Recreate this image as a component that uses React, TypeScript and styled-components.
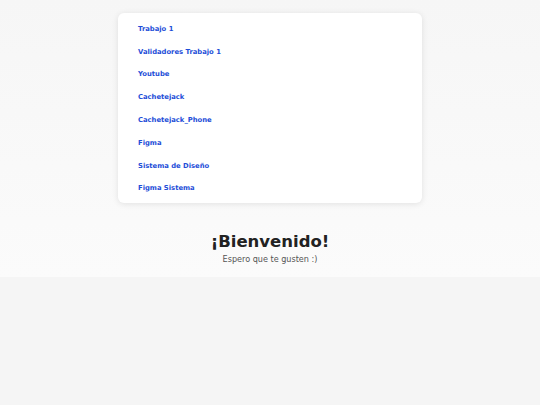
import React from "react";
import styled, { createGlobalStyle } from "styled-components";

const Global = createGlobalStyle`
  html, body { margin: 0; padding: 0; }
  body {
    background: #f5f5f5;
    font-family: "DejaVu Sans", Verdana, sans-serif;
  }
`;

const Hero = styled.main`
  display: flex;
  flex-direction: column;
  align-items: center;
  padding-top: 13px;
  height: 264px;
  background: linear-gradient(180deg, #f6f6f6 0%, #fbfbfb 100%);
`;

const Card = styled.nav`
  width: 304px;
  box-sizing: border-box;
  background: #ffffff;
  border-radius: 6px;
  box-shadow: 0 1px 6px rgba(0, 0, 0, 0.1);
  padding: 4.8px 20px 2.4px;
  display: flex;
  flex-direction: column;
`;

const Link = styled.a`
  display: block;
  height: 22.8px;
  line-height: 22.8px;
  font-size: 6.8px;
  font-weight: bold;
  color: #1d4ed8;
  text-decoration: none;
`;

const Title = styled.h1`
  margin: 29px 0 0;
  font-size: 16.5px;
  font-weight: bold;
  color: #222;
  line-height: 20px;
`;

const Subtitle = styled.p`
  margin: 1px 0 0;
  font-size: 8.1px;
  color: #555;
  line-height: 12px;
`;

const links = [
  "Trabajo 1",
  "Validadores Trabajo 1",
  "Youtube",
  "Cachetejack",
  "Cachetejack_Phone",
  "Figma",
  "Sistema de Diseño",
  "Figma Sistema",
];

export default function App() {
  return (
    <>
      <Global />
      <Hero>
        <Card>
          {links.map((l) => (
            <Link key={l} href="#">
              {l}
            </Link>
          ))}
        </Card>
        <Title>¡Bienvenido!</Title>
        <Subtitle>Espero que te gusten :)</Subtitle>
      </Hero>
    </>
  );
}
